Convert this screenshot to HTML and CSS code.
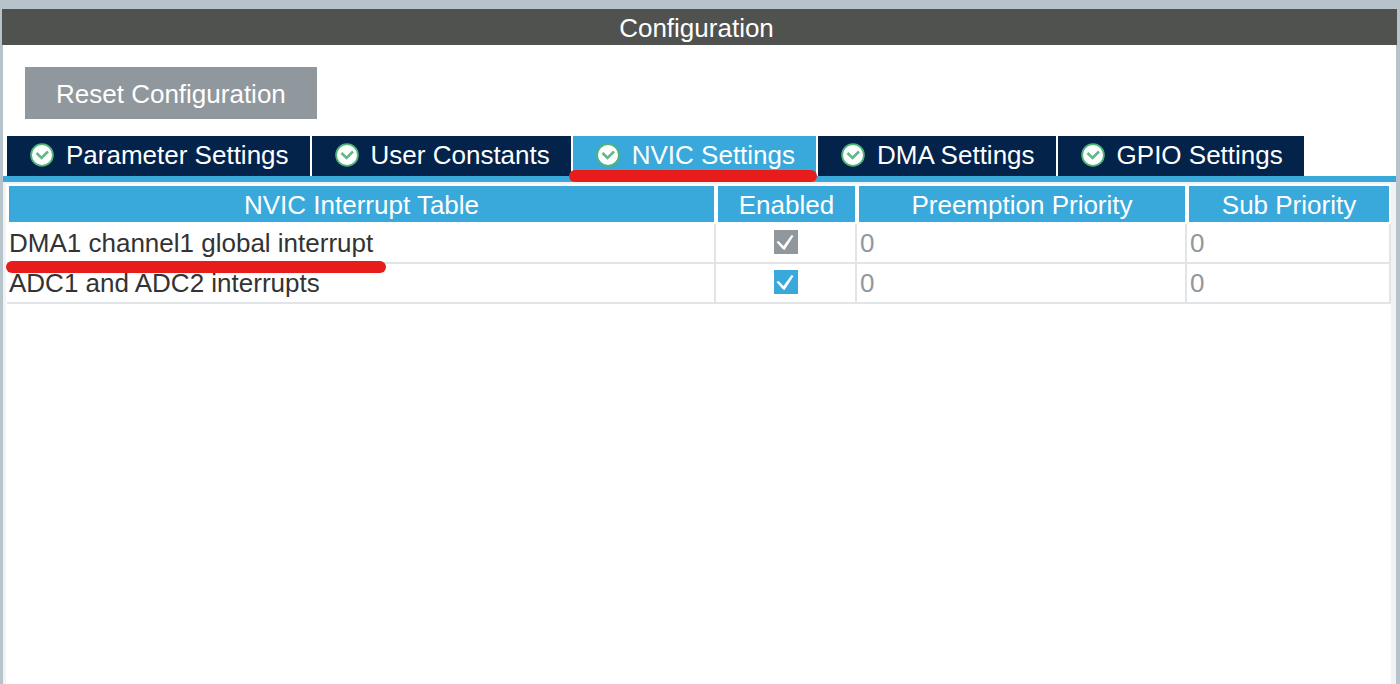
FILE: index.html
```html
<!DOCTYPE html>
<html lang="en">
<head>
  <meta charset="UTF-8" />
  <meta name="viewport" content="width=device-width, initial-scale=1.0"/>
  <title>Configuration</title>
  <link rel="stylesheet" href="styles.css">
</head>
<body>
  <!-- status icon shared by all tabs -->
  <svg class="defs" width="0" height="0" aria-hidden="true">
    <symbol id="ok" viewBox="0 0 24 24">
      <circle cx="12" cy="12" r="11.8" fill="#4fb477"/>
      <circle cx="12" cy="12" r="10" fill="#fff"/>
      <path d="M6.5 10l5 5 6.5-6.5" fill="none" stroke="#62b988" stroke-width="2.6"/>
    </symbol>
  </svg>

  <main class="panel">
    <h1 class="title">Configuration</h1>

    <div class="toolbar">
      <button class="btn-reset" type="button">Reset Configuration</button>
    </div>

    <div class="tabs" role="tablist">
      <button class="tab" type="button" role="tab"><svg class="icon"><use href="#ok"/></svg>Parameter Settings</button>
      <button class="tab" type="button" role="tab"><svg class="icon"><use href="#ok"/></svg>User Constants</button>
      <button class="tab active" type="button" role="tab" aria-selected="true"><svg class="icon"><use href="#ok"/></svg>NVIC Settings<span class="mark mark-tab"></span></button>
      <button class="tab" type="button" role="tab"><svg class="icon"><use href="#ok"/></svg>DMA Settings</button>
      <button class="tab" type="button" role="tab"><svg class="icon"><use href="#ok"/></svg>GPIO Settings</button>
    </div>

    <div class="content">
      <table class="nvic">
        <thead>
          <tr>
            <th>NVIC Interrupt Table</th>
            <th class="col-enabled">Enabled</th>
            <th class="col-preemption">Preemption Priority</th>
            <th class="col-sub">Sub Priority</th>
          </tr>
        </thead>
        <tbody>
          <tr>
            <td><label class="name" for="dma1">DMA1 channel1 global interrupt<span class="mark mark-row"></span></label></td>
            <td class="check"><input type="checkbox" id="dma1" checked disabled></td>
            <td class="value">0</td>
            <td class="value">0</td>
          </tr>
          <tr>
            <td><label class="name" for="adc">ADC1 and ADC2 interrupts</label></td>
            <td class="check"><input type="checkbox" id="adc" checked></td>
            <td class="value">0</td>
            <td class="value">0</td>
          </tr>
        </tbody>
      </table>
    </div>
  </main>
</body>
</html>
```
FILE: styles.css
```css
* {
  box-sizing: border-box;
}
body {
  margin: 0;
  padding: 9px 3px 0 2px;
  background-color: #b7c3ca;
  font-family: "Liberation Sans", Arial, sans-serif;
  font-size: 26px;
  line-height: 36px;
  color: #333;
}
button {
  border: none;
  font: inherit;
  color: #fff;
  cursor: pointer;
}
.defs {
  position: absolute;
}
.panel {
  display: flex;
  flex-direction: column;
  min-height: calc(100vh - 9px);
}
.title {
  margin: 0;
  padding: 1px 6px 0 0;
  height: 36px;
  background-color: #50524f;
  color: #fff;
  font-size: 26px;
  font-weight: normal;
  text-align: center;
}
.toolbar {
  margin: 0 1px;
  padding: 22px 22px 17px;
  background-color: #fff;
}
.btn-reset {
  display: block;
  height: 52px;
  padding: 2px 31px 0;
  background-color: #90979d;
}

.tabs {
  display: flex;
  gap: 2px;
  margin: 0 1px;
  padding: 0 4px;
  background-color: #fff;
}
.tab {
  position: relative;
  display: flex;
  align-items: center;
  gap: 12px;
  height: 40px;
  padding: 0 21px 2px 23px;
  background-color: #03234b;
  white-space: nowrap;
}
.tab.active {
  background-color: #39a9dc;
}
.icon {
  width: 24px;
  height: 24px;
}

.content {
  flex: 1;
  margin: 0 1px;
  padding: 2px 5px 0 3px;
  border-top: 6px solid #39a9dc;
  background: linear-gradient(#fff, #fff) content-box, #f0f2f4;
}
.nvic {
  width: 100%;
  table-layout: fixed;
  border-collapse: separate;
  border-spacing: 0;
  padding-left: 1px;
}
.nvic th {
  height: 40px;
  padding: 2px 0 0;
  border: 2px solid #fff;
  background-color: #39a9dc;
  background-clip: padding-box;
  color: #fff;
  font-weight: normal;
  line-height: 34px;
}
.nvic td {
  height: 40px;
  padding: 0 2px;
  border-right: 2px solid #e1e5e8;
  border-bottom: 2px solid #e1e5e8;
}
.col-enabled {
  width: 141px;
}
.col-preemption {
  width: 330px;
}
.col-sub {
  width: 204px;
}
.nvic .value {
  padding-left: 3px;
  color: #90979d;
}
.name {
  position: relative;
}
.nvic .check {
  padding-bottom: 2px;
  line-height: 0;
  text-align: center;
}
.check input {
  appearance: none;
  display: inline-block;
  width: 24px;
  height: 24px;
  margin: 0;
  background-color: #39a9dc;
}
.check input:disabled {
  background-color: #90979d;
}
.check input:checked::before {
  content: "";
  display: block;
  width: 24px;
  height: 24px;
  background-color: #fff;
  clip-path: polygon(3px 12px, 5px 11px, 10px 16px, 18px 5px, 20px 6px, 11px 20px, 9px 19px);
}

/* red highlighter strokes */
.mark {
  position: absolute;
  z-index: 1;
  height: 12px;
  border-radius: 6px;
  background-color: #e71d1c;
}
.mark-tab {
  left: -4px;
  right: -1px;
  bottom: -6px;
}
.mark-row {
  left: -3px;
  right: -13px;
  top: 33px;
}
```
